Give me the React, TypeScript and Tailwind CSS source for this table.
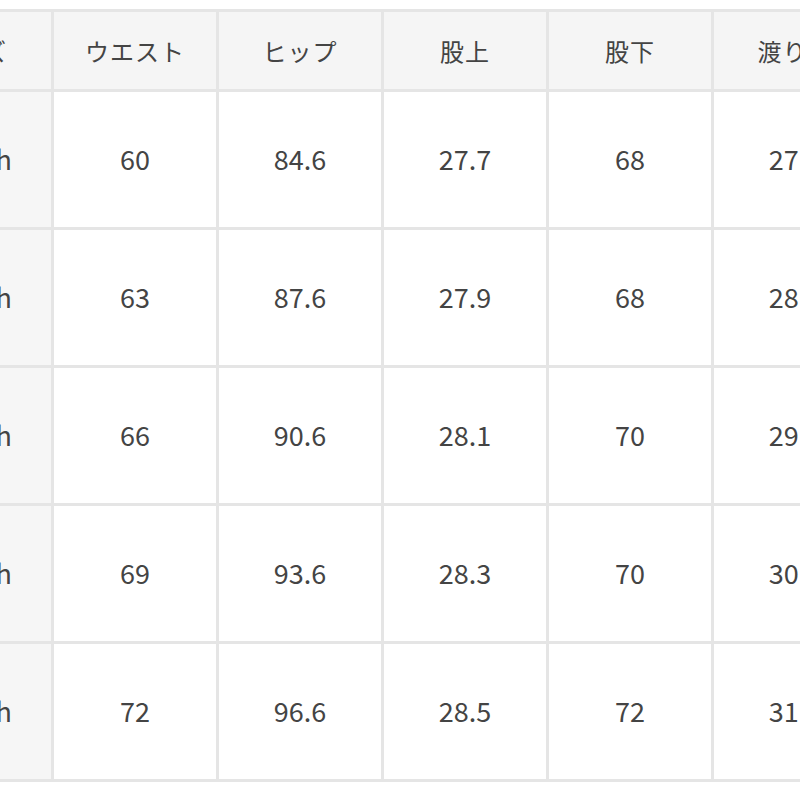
const headers = ["サイズ", "ウエスト", "ヒップ", "股上", "股下", "渡り幅"];

const rows = [
  ["24inch", "60", "84.6", "27.7", "68", "27.5"],
  ["25inch", "63", "87.6", "27.9", "68", "28.5"],
  ["26inch", "66", "90.6", "28.1", "70", "29.5"],
  ["27inch", "69", "93.6", "28.3", "70", "30.5"],
  ["28inch", "72", "96.6", "28.5", "72", "31.5"],
];

const font = { fontFamily: '"Noto Sans CJK JP", "Noto Sans", sans-serif' };

export default function App() {
  return (
    <div className="w-[800px] h-[800px] bg-white overflow-hidden text-[#444]" style={font}>
      <div className="mt-[9px] -ml-[114px] w-max grid grid-cols-[repeat(6,162px)] grid-rows-[77px_repeat(5,135px)] gap-[3px] p-[3px] bg-[#e5e5e5]">
        {headers.map((h) => (
          <div key={h} className="bg-[#f5f5f5] flex items-center justify-center text-[24px] tracking-[0.04em]">
            {h}
          </div>
        ))}
        {rows.map((r) =>
          r.map((v, i) => (
            <div
              key={r[0] + i}
              className={
                (i === 0 ? "bg-[#f6f6f6] " : "bg-white ") +
                "flex items-center justify-center text-[27px]"
              }
            >
              {v}
            </div>
          ))
        )}
      </div>
    </div>
  );
}
